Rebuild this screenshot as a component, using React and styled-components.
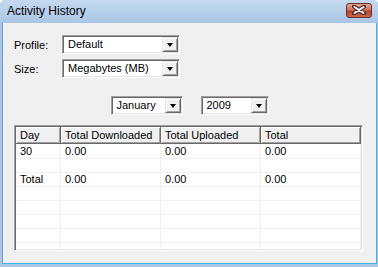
import React from 'react';
import styled, { createGlobalStyle } from 'styled-components';

const GlobalStyle = createGlobalStyle`
  html, body {
    margin: 0;
    padding: 0;
    background: #ffffff;
  }
  body {
    font-family: "Liberation Sans", Arial, sans-serif;
    font-size: 11px;
    color: #000;
  }
`;

const rows = [
  ['30', '0.00', '0.00', '0.00'],
  ['', '', '', ''],
  ['Total', '0.00', '0.00', '0.00'],
  ['', '', '', ''],
  ['', '', '', ''],
  ['', '', '', ''],
  ['', '', '', ''],
  ['', '', '', ''],
];

const columns = ['Day', 'Total Downloaded', 'Total Uploaded', 'Total'];

function App() {
  return (
    <>
      <GlobalStyle />
      <Window>
        <TitleBar>
          <Title>Activity History</Title>
          <CloseButton>
            <svg width="14" height="10" viewBox="0 0 14 10">
              <path d="M2 1.5 L12 8.5 M12 1.5 L2 8.5" stroke="#4a2a26" strokeWidth="4" strokeLinecap="round" />
              <path d="M2.5 2 L11.5 8 M11.5 2 L2.5 8" stroke="#ffffff" strokeWidth="2" strokeLinecap="round" />
            </svg>
          </CloseButton>
        </TitleBar>
        <Body>
          <FormGrid>
            <Label>Profile:</Label>
            <Combo width={118}>
              <ComboText>Default</ComboText>
              <ComboButton><Arrow /></ComboButton>
            </Combo>
            <Label>Size:</Label>
            <Combo width={118}>
              <ComboText>Megabytes (MB)</ComboText>
              <ComboButton><Arrow /></ComboButton>
            </Combo>
          </FormGrid>
          <DateRow>
            <Combo width={72}>
              <ComboText>January</ComboText>
              <ComboButton><Arrow /></ComboButton>
            </Combo>
            <Combo width={68}>
              <ComboText>2009</ComboText>
              <ComboButton><Arrow /></ComboButton>
            </Combo>
          </DateRow>
          <Table>
            <HeaderRow>
              {columns.map((c) => (
                <HeaderCell key={c}>{c}</HeaderCell>
              ))}
            </HeaderRow>
            <Rows>
              {rows.map((r, i) => (
                <Row key={i}>
                  {r.map((v, j) => (
                    <Cell key={j}>{v}</Cell>
                  ))}
                </Row>
              ))}
            </Rows>
          </Table>
        </Body>
      </Window>
    </>
  );
}

const Window = styled.div`
  width: 378px;
  height: 267px;
  display: flex;
  flex-direction: column;
  background: #abc6e5;
  border-radius: 5px 5px 0 0;
  overflow: hidden;
`;

const TitleBar = styled.div`
  height: 23px;
  flex: 0 0 23px;
  display: flex;
  align-items: center;
  justify-content: space-between;
  padding: 0 6px 0 7px;
  box-sizing: border-box;
  background: linear-gradient(#c4d9ef, #aac6e6);
`;

const Title = styled.span`
  font-size: 12px;
  color: #000;
  margin-top: -1px;
`;

const CloseButton = styled.div`
  width: 26px;
  height: 15px;
  box-sizing: border-box;
  margin-top: -3px;
  border: 1px solid #6e2c25;
  border-radius: 3px;
  background: linear-gradient(#e2a497 0%, #d0735f 45%, #b53f2b 55%, #cc6a52 100%);
  display: flex;
  align-items: center;
  justify-content: center;
`;

const Body = styled.div`
  flex: 1;
  margin: 0 1px 3px 2px;
  border-left: 1px solid #6c9bcd;
  border-right: 1px solid #3ab4ea;
  border-bottom: 1px solid #3ab4ea;
  background: #f0f0f0;
  padding: 12px 11px 0 11px;
  display: flex;
  flex-direction: column;
`;

const FormGrid = styled.div`
  display: grid;
  grid-template-columns: 48px auto;
  row-gap: 5px;
  align-items: center;
  justify-items: start;
`;

const Label = styled.span`
  font-size: 11px;
`;

const Combo = styled.div`
  width: ${(p) => p.width}px;
  height: 19px;
  box-sizing: border-box;
  background: #fff;
  border-top: 1px solid #a0a0a0;
  border-left: 1px solid #a0a0a0;
  border-right: 1px solid #fff;
  border-bottom: 1px solid #fff;
  box-shadow: inset 1px 1px 0 #696969, inset -1px -1px 0 #e3e3e3;
  display: flex;
  align-items: stretch;
  padding: 1px;
`;

const ComboText = styled.span`
  flex: 1;
  padding-left: 4px;
  line-height: 15px;
  font-size: 11px;
  white-space: nowrap;
  overflow: hidden;
`;

const ComboButton = styled.div`
  width: 16px;
  box-sizing: border-box;
  background: #f0f0f0;
  border-top: 1px solid #e3e3e3;
  border-left: 1px solid #e3e3e3;
  border-right: 1px solid #696969;
  border-bottom: 1px solid #696969;
  box-shadow: inset 1px 1px 0 #fff, inset -1px -1px 0 #a0a0a0;
  display: flex;
  align-items: center;
  justify-content: center;
`;

const Arrow = styled.div`
  width: 0;
  height: 0;
  border-left: 3.5px solid transparent;
  border-right: 3.5px solid transparent;
  border-top: 4px solid #000;
  margin-top: 1px;
`;

const DateRow = styled.div`
  display: flex;
  justify-content: center;
  gap: 18px;
  margin-top: 18px;
`;

const Table = styled.div`
  margin-top: 10px;
  width: 349px;
  height: 126px;
  box-sizing: border-box;
  background: #fff;
  border-top: 1px solid #a0a0a0;
  border-left: 1px solid #a0a0a0;
  border-right: 1px solid #fff;
  border-bottom: 1px solid #fff;
  box-shadow: inset 1px 1px 0 #696969, inset -1px -1px 0 #e3e3e3;
  padding: 1px;
  display: flex;
  flex-direction: column;
  overflow: hidden;
`;

const grid = `
  display: grid;
  grid-template-columns: 45px 100px 100px 100px;
`;

const HeaderRow = styled.div`
  ${grid}
  height: 17px;
  flex: 0 0 17px;
`;

const HeaderCell = styled.div`
  box-sizing: border-box;
  background: #f0f0f0;
  border-right: 1px solid #696969;
  border-bottom: 1px solid #696969;
  box-shadow: inset 1px 1px 0 #fff, inset -1px -1px 0 #a0a0a0;
  padding-left: 4px;
  line-height: 16px;
  white-space: nowrap;
`;

const Rows = styled.div`
  flex: 1;
  overflow: hidden;
  padding-top: 1px;
`;

const Row = styled.div`
  ${grid}
  height: 14px;
`;

const Cell = styled.div`
  box-sizing: border-box;
  border-right: 1px solid #f0f0f0;
  border-bottom: 1px solid #f0f0f0;
  padding-left: 4px;
  line-height: 13px;
  white-space: nowrap;
`;

export default App;
